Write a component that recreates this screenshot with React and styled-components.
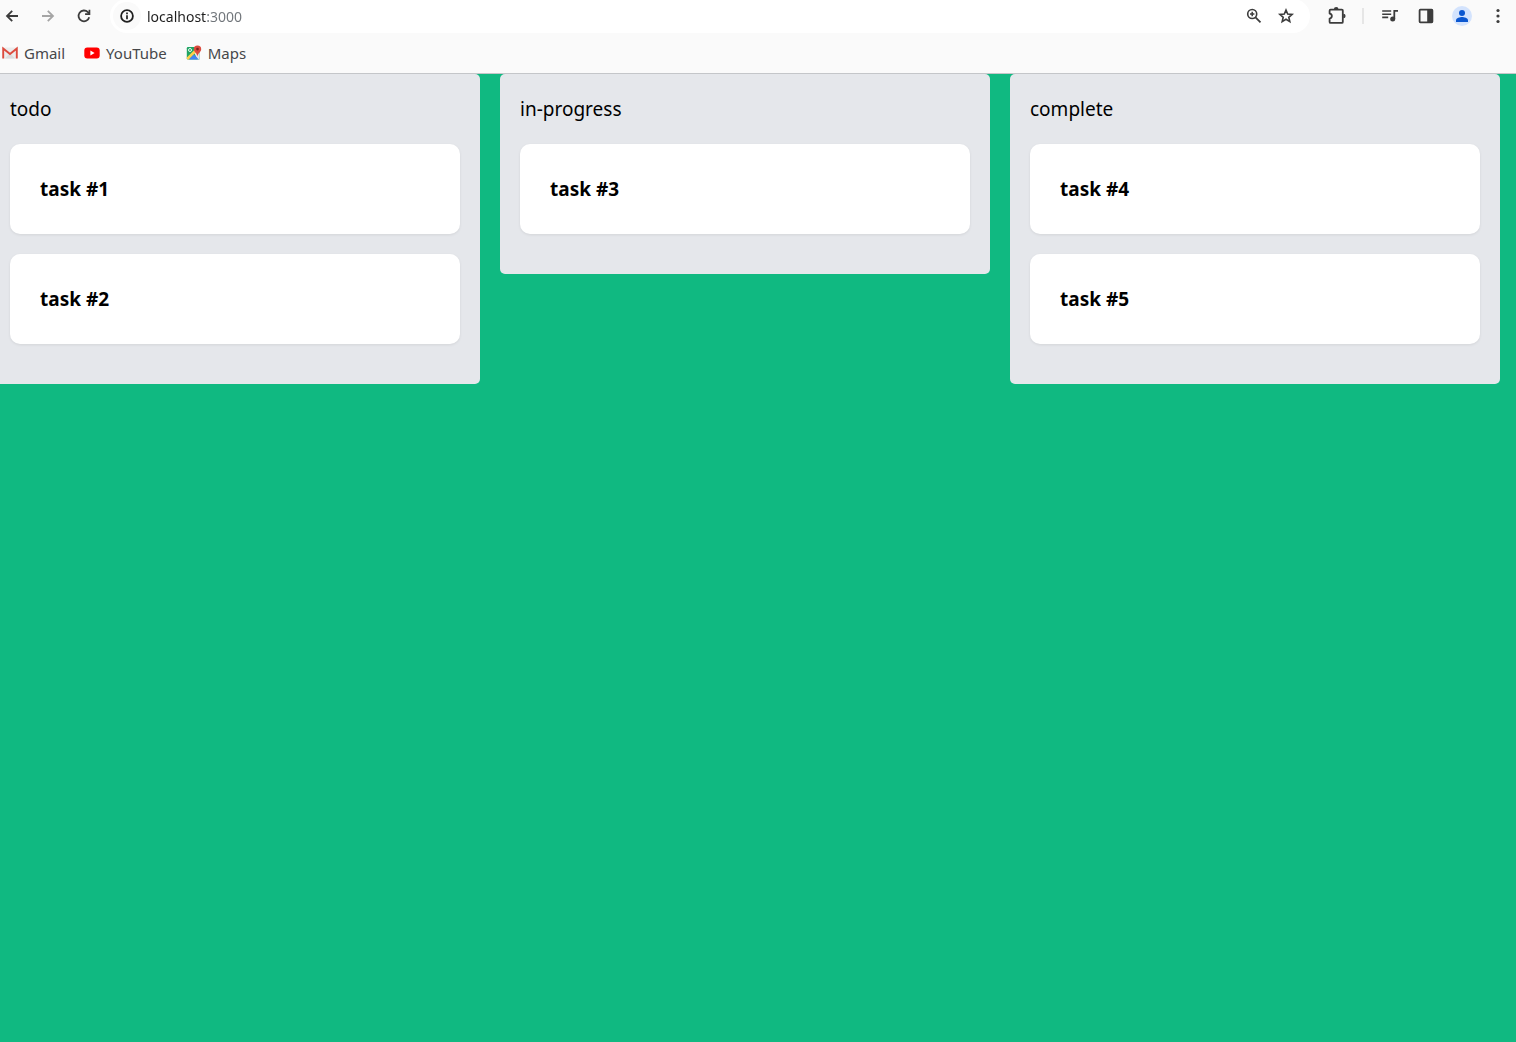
import React from "react";
import styled, { createGlobalStyle } from "styled-components";

const GlobalStyle = createGlobalStyle`
  *, *::before, *::after { box-sizing: border-box; }
  body {
    margin: 0;
    background: #10b981;
    color: #000;
    font-family: "Noto Sans", "Open Sans", sans-serif;
  }
  button, input { font: inherit; }
`;

const Page = styled.div`
  overflow-x: clip;
`;

const BrowserBar = styled.header`
  background: #fafafa;
  border-bottom: 1px solid #c4c6c9;
`;

const Toolbar = styled.div`
  display: flex;
  align-items: center;
  height: 32px;
  margin-left: -6px;
`;

const IconButton = styled.button`
  display: flex;
  flex: none;
  align-items: center;
  justify-content: center;
  width: ${(p) => p.$width || 36}px;
  height: 32px;
  padding: 0;
  border: 0;
  background: none;
  color: ${(p) => p.$color || "#3c3c3c"};
`;

const AddressBar = styled.form`
  display: flex;
  flex: 1;
  align-items: center;
  height: 34px;
  margin: 0 9px 0 8px;
  padding: 0 8px 0 3px;
  background: #fff;
  border-radius: 17px;
`;

const SiteInfo = styled(IconButton)`
  width: 28px;
  height: 28px;
  border-radius: 50%;
  background: #fafafa;
  color: #1f1f1f;
`;

const AddressInput = styled.input`
  flex: 1;
  min-width: 0;
  height: 32px;
  padding: 0 6px;
  border: 0;
  outline: 0;
  font-size: 14px;
  background: linear-gradient(to right, #1f1f1f 66px, #70757a 66px);
  background-clip: text;
  -webkit-background-clip: text;
  -webkit-text-fill-color: transparent;
`;

const Divider = styled.span`
  width: 2px;
  height: 16px;
  margin: 0 8px 0 7px;
  background: #e6e6e6;
`;

const Avatar = styled.span`
  display: flex;
  width: 20px;
  height: 20px;
  border-radius: 50%;
  background: #d3e3fd;
  color: #0b57d0;
`;

const Bookmarks = styled.nav`
  display: flex;
  align-items: center;
  gap: 19px;
  height: 41px;
  padding: 0 2px;
`;

const Bookmark = styled.a`
  display: flex;
  align-items: center;
  gap: 6px;
  color: #46474a;
  font-size: 15px;
  line-height: 20px;
  text-decoration: none;
`;

const Board = styled.main`
  display: grid;
  grid-template-columns: repeat(3, minmax(0, 1fr));
  align-items: start;
  gap: 20px;
  margin: 0 16px 0 -10px;
`;

const Column = styled.section`
  padding: 20px;
  background: #e5e7eb;
  border-radius: 5px;
`;

const ColumnTitle = styled.h2`
  margin: 0 0 20px;
  font-size: 19px;
  font-weight: 400;
  line-height: 30px;
`;

const Card = styled.article`
  margin-bottom: 20px;
  padding: 30px;
  background: #fff;
  border-radius: 10px;
  box-shadow: 0 1px 3px rgba(0, 0, 0, 0.08);
`;

const CardTitle = styled.h3`
  margin: 0;
  font-size: 19px;
  font-weight: 700;
  line-height: 30px;
`;

const Glyph = ({ size = 20, children }) => (
  <svg width={size} height={size} viewBox="0 0 20 20" fill="none" stroke="currentColor" strokeWidth="1.8" aria-hidden="true">
    {children}
  </svg>
);

const BackIcon = () => <Glyph><path d="M16 10H5M10.2 4.8 5 10l5.2 5.2" /></Glyph>;
const ForwardIcon = () => <Glyph><path d="M4 10h11M9.8 4.8 15 10l-5.2 5.2" /></Glyph>;
const ReloadIcon = () => (
  <Glyph>
    <path d="M15.2 11.2A5.4 5.4 0 1 1 13.9 6.2L15 7.4" />
    <path d="M16.3 3.8V9h-5.2V7.3h3.5V3.8z" fill="currentColor" stroke="none" />
  </Glyph>
);
const InfoIcon = () => (
  <Glyph>
    <circle cx="10" cy="10" r="5.9" />
    <path d="M10 9.3v4M10 6.6v1.6" strokeWidth="1.7" />
  </Glyph>
);
const ZoomIcon = () => (
  <Glyph>
    <circle cx="8.2" cy="8" r="4.5" strokeWidth="1.6" />
    <path d="m11.5 11.4 5 5" />
    <path d="M8.2 5.8v4.4M6 8h4.4" strokeWidth="1.5" />
  </Glyph>
);
const StarIcon = () => (
  <Glyph>
    <path d="m10 4 1.7 4 4.4.4-3.3 2.9 1 4.3-3.8-2.3-3.8 2.3 1-4.3-3.3-2.9 4.4-.4z" strokeWidth="1.6" />
  </Glyph>
);
const ExtensionIcon = () => (
  <Glyph>
    <path d="M3.6 3.700h11.200a1 1 0 0 1 1 1v11.200a1 1 0 0 1-1 1H3.600a1 1 0 0 1-1-1V12.600c3-.4 3-4.600 0-5V4.700a1 1 0 0 1 1-1z" strokeLinejoin="round" />
    <path d="M6.900 3.300a2.300 2.300 0 0 1 4.600 0zM16.300 7.700a2.300 2.300 0 0 1 0 4.600z" fill="currentColor" stroke="none" />
  </Glyph>
);
const QueueIcon = () => (
  <Glyph>
    <path d="M2.200 5h9M2.200 8.200h9M2.200 11.400h6" strokeWidth="1.600" />
    <path d="M14.300 13V4.900h3.700" />
    <circle cx="12.700" cy="13" r="2.500" fill="currentColor" stroke="none" />
  </Glyph>
);
const PanelIcon = () => (
  <Glyph>
    <rect x="3.600" y="3.600" width="12.800" height="12.800" rx="0.800" />
    <path d="M11.200 3.300h5.300v13.400h-5.300z" fill="currentColor" stroke="none" />
  </Glyph>
);
const PersonIcon = () => (
  <Glyph>
    <g fill="currentColor" stroke="none">
      <circle cx="10" cy="7" r="3" />
      <path d="M4 16v-1.600c0-2.300 4-3.300 6-3.300s6 1 6 3.300V16z" />
    </g>
  </Glyph>
);
const MenuIcon = () => (
  <Glyph>
    <g fill="currentColor" stroke="none">
      <circle cx="10" cy="4.500" r="1.600" />
      <circle cx="10" cy="10" r="1.600" />
      <circle cx="10" cy="15.500" r="1.600" />
    </g>
  </Glyph>
);

const GmailLogo = () => (
  <svg width="16" height="16" viewBox="0 0 16 16" aria-hidden="true">
    <path d="M1 2.500h14v11H1z" fill="#ececec" />
    <path d="M3 13.500 8 8l5 5.500z" fill="#dcdcdc" />
    <path d="M1.200 13.500v-10L8 9l6.800-5.500v10" fill="none" stroke="#dc4b3e" strokeWidth="1.900" />
  </svg>
);
const YouTubeLogo = () => (
  <svg width="16" height="16" viewBox="0 0 16 16" aria-hidden="true">
    <rect x="0.300" y="2.500" width="15.400" height="11" rx="3" fill="#f00" />
    <path d="m6.400 5.600 4.200 2.400-4.200 2.400z" fill="#fff" />
  </svg>
);
const MapsLogo = () => (
  <svg width="16" height="16" viewBox="0 0 16 16" aria-hidden="true">
    <path d="M2 2h11.500v12.500H2A1.200 1.200 0 0 1 .8 13.300V3.200A1.200 1.200 0 0 1 2 2z" fill="#1fa463" />
    <path d="M8 7.600 11 5l2.500 3v6.500h-2z" fill="#e4e6e9" />
    <path d="M.8 12.600 8.800 4.600l2 2-8 7.900H2a1.200 1.200 0 0 1-1.200-1.200z" fill="#ffd04b" />
    <path d="M2.800 14.500 7.800 9.500l5 5z" fill="#4285f4" />
    <circle cx="4" cy="5" r="1.500" fill="none" stroke="#fff" strokeWidth="0.900" />
    <path d="M11.500.5a3.700 3.700 0 0 1 3.700 3.700c0 2.600-3.100 3.500-3.700 7.300-.6-3.800-3.700-4.700-3.700-7.300A3.700 3.700 0 0 1 11.500.5z" fill="#dc4b3e" />
    <circle cx="11.500" cy="4.100" r="1.300" fill="#7b231c" />
  </svg>
);

const bookmarks = [
  { name: "Gmail", Logo: GmailLogo },
  { name: "YouTube", Logo: YouTubeLogo },
  { name: "Maps", Logo: MapsLogo },
];

const columns = [
  { title: "todo", tasks: ["task #1", "task #2"] },
  { title: "in-progress", tasks: ["task #3"] },
  { title: "complete", tasks: ["task #4", "task #5"] },
];

export default function App() {
  return (
    <Page>
      <GlobalStyle />
      <BrowserBar>
        <Toolbar>
          <IconButton aria-label="Back"><BackIcon /></IconButton>
          <IconButton aria-label="Forward" $color="#a5a5a5"><ForwardIcon /></IconButton>
          <IconButton aria-label="Reload"><ReloadIcon /></IconButton>
          <AddressBar onSubmit={(e) => e.preventDefault()}>
            <SiteInfo type="button" aria-label="Site information"><InfoIcon /></SiteInfo>
            <AddressInput aria-label="Address" defaultValue="localhost:3000" spellCheck={false} />
            <IconButton type="button" aria-label="Zoom" $width={32}><ZoomIcon /></IconButton>
            <IconButton type="button" aria-label="Bookmark this page" $width={32}><StarIcon /></IconButton>
          </AddressBar>
          <IconButton aria-label="Extensions"><ExtensionIcon /></IconButton>
          <Divider />
          <IconButton aria-label="Media"><QueueIcon /></IconButton>
          <IconButton aria-label="Side panel"><PanelIcon /></IconButton>
          <IconButton aria-label="Profile"><Avatar><PersonIcon /></Avatar></IconButton>
          <IconButton aria-label="Menu"><MenuIcon /></IconButton>
        </Toolbar>
        <Bookmarks aria-label="Bookmarks">
          {bookmarks.map(({ name, Logo }) => (
            <Bookmark key={name} href="#"><Logo />{name}</Bookmark>
          ))}
        </Bookmarks>
      </BrowserBar>
      <Board>
        {columns.map(({ title, tasks }) => (
          <Column key={title}>
            <ColumnTitle>{title}</ColumnTitle>
            {tasks.map((task) => (
              <Card key={task}><CardTitle>{task}</CardTitle></Card>
            ))}
          </Column>
        ))}
      </Board>
    </Page>
  );
}
